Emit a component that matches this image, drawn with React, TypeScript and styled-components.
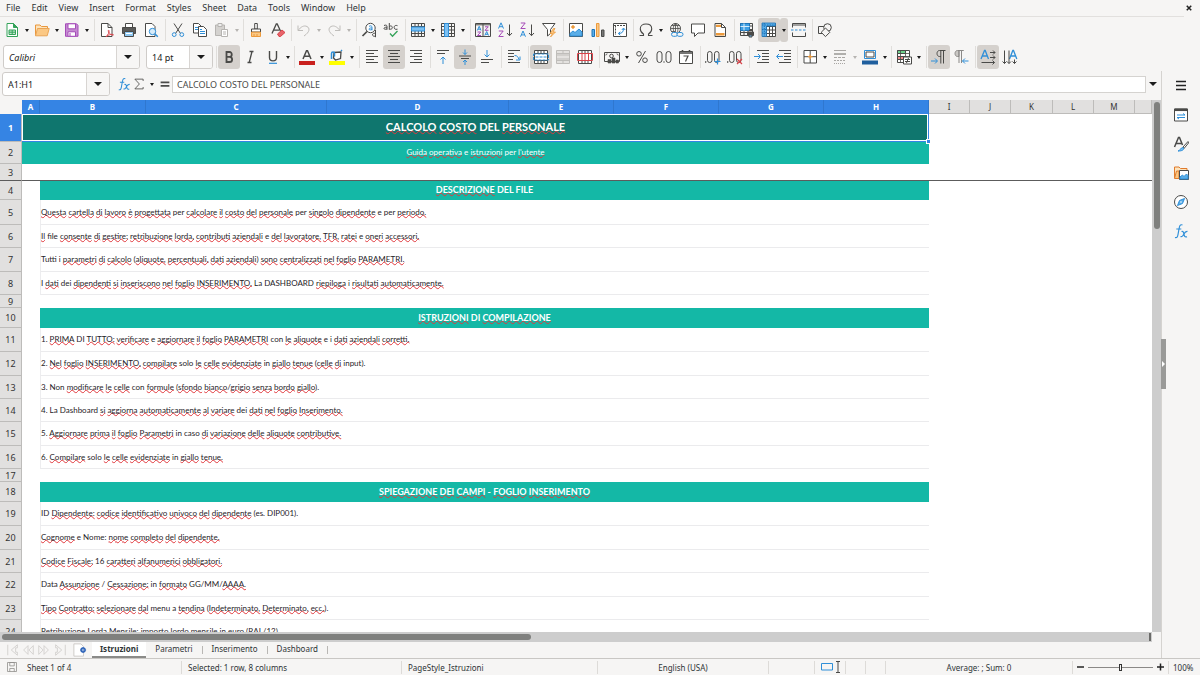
import React from 'react';
import styled, { createGlobalStyle, css } from 'styled-components';

const ui = '"Noto Sans", "Open Sans", sans-serif';
const cellFont = 'Lato, "Noto Sans", sans-serif';
const ink = '#4a4a48';
const blue = '#2f8fd8';
const red = '#d9434a';
const purple = '#a54bb8';
const orange = '#ec9a3c';
const green = '#35a35a';
const faint = '#bfbdba';
const line = '#d5d3d0';

const GlobalStyle = createGlobalStyle`
  * { box-sizing: border-box; }
  body { margin: 0; background: #f6f5f4; font-family: ${ui}; font-size: 9px; color: #2e3436; overflow: hidden; }
  button, input { font: inherit; color: inherit; margin: 0; padding: 0; border: 0; background: none; outline: 0; border-radius: 0; min-width: 0; }
  svg { display: block; flex: none; }
`;

/* ---------- icons ---------- */

const Svg = ({ children, size = 16 }: { children: React.ReactNode; size?: number }) => (
  <svg width={size} height={size} viewBox="0 0 16 16" fill="none" stroke={ink} strokeWidth="1" aria-hidden="true">
    {children}
  </svg>
);

const Lines = ({ rows, color = ink }: { rows: [number, number, number][]; color?: string }) => (
  <>
    {rows.map(([x1, x2, y]) => (
      <path key={y} d={`M${x1} ${y}H${x2}`} stroke={color} />
    ))}
  </>
);

const gridPath = 'M1.5 1.5h13v13h-13zM1.5 4.5h13M1.5 8h13M1.5 11.5h13M5 1.5v13M8.3 1.5v13M11.5 1.5v13';
const sortArrow = 'M12.5 2.5v11M10 11l2.5 2.7L15 11';

const icons: Record<string, React.ReactNode> = {
  newDoc: (
    <>
      <path d="M3 1.5h6.5l4 4v9H3z" fill="#fff" stroke={green} />
      <path d="M9.5 1.5v4h4z" fill={green} stroke={green} />
      <path d="M5 8h6.5v4.5H5zM5 10.2h6.5M8.2 8v4.5" stroke={green} fill="#bfe6cb" />
    </>
  ),
  open: (
    <>
      <path d="M1.5 13.5V3H6l1.500 1.500h6v2" fill="#fde3bb" stroke="#e9973d" />
      <path d="M1.5 13.8 3.5 6.5h11.7l-2 7.3z" fill="#fbc884" stroke="#e9a455" />
    </>
  ),
  save: (
    <>
      <path d="M1.5 1.800h11L14 3.300v11H1.500z" fill="#c58ad2" stroke={purple} />
      <path d="M4 1.800h7.500v5H4z" fill="#fff" stroke={purple} />
      <path d="M4 14.300V9.800h7.500v4.500z" fill="#fff" stroke={purple} />
      <path d="M6 11v3" stroke={purple} />
    </>
  ),
  pdf: (
    <>
      <path d="M2.500 1.500H9l4 4v9H2.500z" fill="#fff" />
      <path d="M9 1.500v4h4" />
      <path d="M7 14.800c2-2 3.500-4.500 3-6.300-.6-1-1 .3-.4 1.500 1 2 3 3.500 4.900 3-.5-1.400-4.500-.6-7.500 1.800z" stroke={red} />
    </>
  ),
  print: (
    <>
      <path d="M4.500 5.500v-4h7v4" fill="#fff" />
      <path d="M1.500 5.500h13v6h-13z" fill="#5a5a58" />
      <path d="M3.500 9.500h9v5h-9z" fill="#8fc8f2" stroke={ink} />
      <path d="M5 11.500h6" stroke="#fff" />
    </>
  ),
  preview: (
    <>
      <path d="M2.500 1.500H9l3 3v10H2.500z" fill="#fff" />
      <circle cx="9.500" cy="9.500" r="3.200" fill="#d8ecfa" stroke={blue} />
      <path d="m12 12 2.800 2.800" stroke={blue} strokeWidth="1.500" />
    </>
  ),
  cut: (
    <>
      <path d="M4 1.500 10.500 11.500M12 1.500 5.500 11.500" />
      <circle cx="4.200" cy="12.600" r="1.900" stroke={blue} />
      <circle cx="11.800" cy="12.600" r="1.900" stroke={blue} />
    </>
  ),
  copy: (
    <>
      <path d="M1.500 1.500h5L9 4v7H1.500z" fill="#fff" />
      <path d="M3 5.500h3M3 7.500h3" stroke={blue} />
      <path d="M6.500 4.500h5l3 3v7h-8z" fill="#fff" />
      <path d="M8 9.500h5M8 11.500h5M8 7.500h2" stroke={blue} />
    </>
  ),
  paste: (
    <g stroke="#b6b4b1">
      <path d="M1.500 3h9v10.500h-9z" fill="#d4d2cf" />
      <path d="M4 1.500h4v3H4z" fill="#eee" />
      <path d="M7.500 7.500h6v7h-6z" fill="#fff" />
      <path d="M9 10h3M9 12h3" />
    </g>
  ),
  brush: (
    <>
      <path d="M6.700 1.500h2.600V7H6.700z" fill="#fff" />
      <path d="M3.500 7h9v3h-9z" fill="#fff" />
      <path d="M3.500 10.200h9v4.300h-9z" fill="#fbc884" stroke={orange} />
      <path d="M6 12v2.500M9 12v2.500" stroke={orange} />
    </>
  ),
  clear: (
    <>
      <path d="M2 11.500 6.300 2h.9L10.500 9M3.800 8.200h5.500" strokeWidth="1.300" />
      <path d="m7.500 12 4.500-4 3 2.500-4.500 4H9z" fill="#e8646a" stroke={red} />
    </>
  ),
  undo: <path d="M2 3.500v5h5M2.300 8.300C4.500 5 8 3 11 4.500c3 1.500 3 5.500-3 9.500" stroke={faint} />,
  redo: <path d="M14 3.500v5H9M13.700 8.300C11.500 5 8 3 5 4.500c-3 1.500-3 5.500 3 9.500" stroke={faint} />,
  find: (
    <>
      <circle cx="9.500" cy="6" r="4.700" fill="#fff" />
      <path d="M6 9.500 1.500 14" strokeWidth="1.700" />
      <path d="M8 4.300c2-1 3-.3 3 1v3M11 6c-4-.5-4 3 0 1.500" stroke={blue} />
      <path d="M14.500 8v7.200M14.500 11.500c-3.500-1.500-4.500 3.500 0 2.700" stroke={ink} />
    </>
  ),
  spell: (
    <>
      <path d="M1 3.500c2-.8 3-.3 3 1v3.200M4 5.200c-4-.3-4 3.200 0 1.700M6.300 1v6.700M6.300 4.500c3.500-2.500 4.500 4 0 2.500M14.500 3.700c-4.500-1.700-4.500 5 0 3.500" />
      <path d="m7 11.500 2.500 2.800L14.500 9" stroke={green} strokeWidth="1.300" />
    </>
  ),
  row: (
    <>
      <path d={gridPath} />
      <path d="M1.500 5h13v4h-13z" fill="#7cc0f2" stroke={blue} />
    </>
  ),
  column: (
    <>
      <path d={gridPath} />
      <path d="M4.500 1.500h4v13h-4z" fill="#7cc0f2" stroke={blue} />
    </>
  ),
  sort: (
    <>
      <path d="M.5 1.500h15v13H.5zM8 1.500v13M.5 2.800h15" />
      <path d="M2.300 8.500 4.200 4.300 6 8.500M3 7.200h2.500M9.800 13.500l1.900-4 1.800 4M10.500 12.300H13" stroke={blue} />
      <path d="M2.500 10h3.300l-3.300 3.500h3.500M10 4.800h3.300L10 8.300h3.500" stroke={purple} />
    </>
  ),
  ascending: (
    <>
      <path d="M1.500 6.500 4 .8l2.500 5.700M2.300 4.700h3.500" stroke={blue} />
      <path d="M1.800 9h4.400l-4.400 5.500h4.700" stroke={purple} />
      <path d={sortArrow} />
    </>
  ),
  descending: (
    <>
      <path d="M1.800 1h4.400L1.800 6.500h4.700" stroke={purple} />
      <path d="M1.500 14.700 4 9l2.500 5.700M2.300 12.900h3.500" stroke={blue} />
      <path d={sortArrow} />
    </>
  ),
  filter: (
    <>
      <path d="M1.500 1.500H14L9.500 7.500v4L6.500 14V7.500z" fill="#fff" />
      <path d="M12.500 6.500 9 11.500h2.500L9.500 15l5-5H12l2-3.500z" fill="#fbc884" stroke={orange} strokeWidth=".8" />
    </>
  ),
  image: (
    <>
      <path d="M1.500 1.500h13v13h-13z" fill="#fff" />
      <circle cx="5" cy="5" r="1.300" fill={orange} stroke={orange} />
      <path d="M2 14v-2.500L5 9l2 1.500L11 7l3 3v4z" fill="#5aaee8" stroke={blue} />
    </>
  ),
  chart: (
    <>
      <path d="M2 7.500h2.500v7H2z" fill="#5aaee8" stroke="#1e74b8" />
      <path d="M6.500 1.500H9v13H6.500z" fill="#fbc884" stroke={orange} />
      <path d="M11.500 8H14v6.500h-2.500z" fill="#777" />
    </>
  ),
  pivot: (
    <>
      <path d="M1.500 1.500h13v13h-13z" fill="#fff" />
      <path d="M3.500 3.500V13M2 3.500h12" strokeDasharray="2 1" />
      <path d="M6.500 11.500c3.500 0 5-1.500 5-5M9.800 8l1.700-2 1.700 2M8.300 9.800l-2 1.700 2 1.700" stroke={blue} />
    </>
  ),
  omega: <path d="M1.500 13.500h4V12C3 10.500 2.300 8.500 2.300 6.700 2.300 4 4.500 2 8 2s5.700 2 5.700 4.700c0 1.800-.7 3.800-3.200 5.300v1.500h4" strokeWidth="1.100" />,
  link: (
    <>
      <circle cx="7.500" cy="6.500" r="5" />
      <path d="M2.500 6.500h10M7.500 1.500v10M4 3.500h7M4 9.500h3M7.500 1.500c-3 3-3 7 0 10M7.500 1.500c3 3 3 6 1.500 9" strokeWidth=".8" />
      <rect x="3.500" y="10.500" width="6" height="3.800" rx="1.900" stroke={blue} fill="#f6f5f4" />
      <rect x="9" y="10.500" width="6" height="3.800" rx="1.900" stroke={blue} fill="#f6f5f4" />
    </>
  ),
  comment: <path d="M1.500 2h13v9H8l-3.500 3.500V11h-3z" fill="#fff" />,
  headerFooter: (
    <>
      <path d="M3 1.500h6.500l4 4v9H3z" fill="#fff" />
      <path d="M4 2.700h5V5H4zM4 11h8.500v2.500H4z" fill={orange} stroke="none" />
      <path d="M9.500 1.500v4h4" />
    </>
  ),
  printArea: (
    <>
      <path d="M1.500 1.500h12v12h-12zM1.500 4h12M1.500 7.500h12M1.500 10.500h12M5 1.500v12M9 1.500v12" />
      <path d="M1.500 1.500h9v7h-9z" fill="#3f9fe3" stroke="#1e74b8" />
      <path d="M1.500 4.500h9M5 1.500v7" stroke="#d8ecfa" />
      <path d="M8.500 10h6v3.500h-6z" fill="#4b4b49" />
      <path d="M10 8.500h3M10 13h3v2h-3z" fill="#6eb4ea" />
    </>
  ),
  freeze: (
    <>
      <path d="M2 1.500h12.500v13H2z" fill="#fff" />
      <path d="M2 4.500h12.500M2 8h12.500M2 11.500h12.500M5.500 1.500v13M8.500 1.500v13M11.500 1.500v13" />
      <path d="M1 1h13.500v3h-9v10.500H1z" fill="#5aaee8" stroke="#1e74b8" strokeWidth=".8" />
      <path d="M3.300 1v13M1 3h13M1 7.500h4M1 11h4" stroke="#1e74b8" strokeDasharray="1.500 1" />
    </>
  ),
  split: (
    <>
      <path d="M1.500 5.500v-4h13v4M1.500 10.500v4h13v-4M1.500 3h13" />
      <path d="M0 8h16" stroke={blue} strokeDasharray="2.500 1.500" />
    </>
  ),
  shapes: (
    <>
      <path d="M1.500 4.500h7v7h-7z" />
      <circle cx="10.500" cy="5.500" r="3.800" fill="#f6f5f4" />
      <path d="m8.500 6 4.300 4.300-4.300 4.300-4.300-4.300z" fill="#f6f5f4" />
    </>
  ),
  bold: <path d="M5.500 3v10h3c3.500 0 3.500-5.200 0-5.200h-3 3c3 0 3-4.800 0-4.800z" strokeWidth="1.800" />,
  italic: <path d="M6.500 2.500h4M4.500 13.500h4M9 2.500 6.200 13.500" strokeWidth="1.300" />,
  underline: (
    <>
      <path d="M4.500 2v6.500c0 4.500 7 4.500 7 0V2" strokeWidth="1.400" />
      <path d="M4 14.300h8" stroke={blue} strokeWidth="1.200" />
    </>
  ),
  fontColor: (
    <>
      <path d="M4 10 7.500 1.800h1L12 10M5.300 7.300h5.400" strokeWidth="1.500" />
      <path d="M0 14h16" stroke="#c9211e" strokeWidth="4" />
    </>
  ),
  highlight: (
    <>
      <path d="m5 3.500 7-.5-.5 6.500-5 1.500-2-2z" fill="#fff" strokeWidth="1.300" />
      <path d="M2.500 10V4.500c0-2 3-2 3 0v3M12 2l1-1" stroke={blue} strokeWidth="1.500" />
      <path d="M0 14h16" stroke="#ffff00" strokeWidth="4" />
    </>
  ),
  alignLeft: <Lines rows={[[2, 14, 1.5], [2, 10, 4.5], [2, 14, 7.5], [2, 10, 10.5], [2, 14, 13.5]]} />,
  alignCenter: <Lines rows={[[2, 14, 1.5], [4, 12, 4.5], [2, 14, 7.5], [4, 12, 10.5], [2, 14, 13.5]]} />,
  alignRight: <Lines rows={[[2, 14, 1.5], [6, 14, 4.5], [2, 14, 7.5], [6, 14, 10.5], [2, 14, 13.5]]} />,
  alignTop: (
    <>
      <Lines rows={[[2, 14, 1.5], [2, 10, 4.5]]} />
      <path d="M8 15V8M5.500 10.500 8 8l2.500 2.500" stroke={blue} />
    </>
  ),
  alignMiddle: (
    <>
      <Lines rows={[[2, 14, 7], [4, 12, 9.5]]} />
      <path d="M8 .5v5M6 3.500l2 2 2-2M8 16v-5M6 13l2-2 2 2" stroke={blue} />
    </>
  ),
  alignBottom: (
    <>
      <Lines rows={[[2, 14, 10.5], [2, 10, 13.5]]} />
      <path d="M8 1v7M5.500 5.500 8 8l2.500-2.500" stroke={blue} />
    </>
  ),
  wrap: (
    <>
      <Lines rows={[[2, 14, 1.5], [2, 8, 4.5], [2, 8, 7.5], [2, 7, 10.5], [2, 14, 13.5]]} />
      <path d="M8.500 6.500c3 0 3.500 1.500 4.500 4M14 7.500V11h-4" stroke={blue} />
    </>
  ),
  merge: (
    <>
      <path d="M1.500 1.500h13v13h-13z" fill="#fff" />
      <path d="M1.500 4.500h13M1.500 11.500h13M5 1.500v3M8 1.500v3M11 1.500v3M5 11.500v3M8 11.500v3M11 11.500v3" />
      <path d="M.5 5h15v6H.5zM2.500 8h11" stroke={blue} strokeDasharray="3 1" />
    </>
  ),
  mergeCells: <path d="M1.500 1.500h13v13h-13zM1.500 4.500h13M1.500 11.500h13M8 1.500v3M8 11.500v3M1.500 6h13v4h-13z" stroke={faint} fill="#e4e2e0" />,
  unmerge: (
    <>
      <path d="M1.500 1.500h13v13h-13zM5 1.500v3M8 1.500v3M11 1.500v3M5 11.500v3M8 11.500v3M11 11.500v3" fill="#fff" />
      <path d="M.5 4.500h15v7H.5zM5 4.500v7M8 4.500v7M11.500 4.500v7" stroke={red} />
    </>
  ),
  currency: (
    <>
      <path d="M.5 3.500h15v9H.5z" />
      <path d="M1.500 6C3 6 3 4.500 3 4.500M14.500 6C13 6 13 4.500 13 4.500" />
      <circle cx="7.500" cy="7" r="1.800" />
      <path d="M4 10.500h3V14H4zM8 9h3v5H8zM12 11h2.500v3H12z" fill="#4b4b49" strokeWidth=".6" />
    </>
  ),
  percent: (
    <>
      <circle cx="5" cy="4.800" r="2.300" />
      <circle cx="11" cy="11.200" r="2.300" />
      <path d="m11.500 2-7 12" />
    </>
  ),
  number: (
    <>
      <rect x="1" y="2.500" width="5" height="11" rx="2.500" />
      <rect x="10" y="2.500" width="5" height="11" rx="2.500" />
      <path d="M7.500 13h1" strokeWidth="1.300" />
    </>
  ),
  date: (
    <>
      <path d="M1.500 2.500h13v12h-13z" fill="#fff" />
      <path d="M1.500 4h13M4.500 1v2M11.500 1v2" strokeWidth="1.600" />
      <path d="M5.500 7H10L7.500 12.500" strokeWidth="1.200" />
    </>
  ),
  addDecimal: (
    <>
      <path d="M0 13h1.300" strokeWidth="1.300" />
      <rect x="2.500" y="2.500" width="4.500" height="11" rx="2.200" />
      <rect x="9.500" y="2.500" width="4.500" height="11" rx="2.200" />
      <path d="M12.500 9.500v6M9.500 12.500h6" stroke={blue} strokeWidth="1.200" />
    </>
  ),
  removeDecimal: (
    <>
      <path d="M0 13h1.300" strokeWidth="1.300" />
      <rect x="2.500" y="2.500" width="4.500" height="11" rx="2.200" />
      <rect x="9.500" y="2.500" width="4.500" height="11" rx="2.200" />
      <path d="m10 10 5 5M15 10l-5 5" stroke={red} strokeWidth="1.200" />
    </>
  ),
  indent: (
    <>
      <Lines rows={[[3, 15, 1.5], [8, 15, 4.5], [8, 15, 7.5], [8, 15, 10.5], [3, 15, 13.5]]} />
      <path d="M0 7.500h6M4 5l2.500 2.500L4 10" stroke={blue} />
    </>
  ),
  outdent: (
    <>
      <Lines rows={[[3, 15, 1.5], [8, 15, 4.5], [8, 15, 7.5], [8, 15, 10.5], [3, 15, 13.5]]} />
      <path d="M7 7.500H1M3 5 .5 7.500 3 10" stroke={blue} />
    </>
  ),
  borders: (
    <>
      <path d="M2 1.500h12.500v12.500H2z" fill="#fff" />
      <path d="M8.200 2v12M2 7.700h12.500" />
      <path d="M8.200 5.500V10M6 7.700h4.500" stroke={orange} strokeWidth="1.200" />
    </>
  ),
  borderStyle: (
    <g stroke="#a9a7a4">
      <path d="M2 1.500h12" />
      <path d="M2 5h12" strokeWidth="1.800" />
      <path d="M2 8.500h12" strokeDasharray="3 1" />
      <path d="M2 11.500h12" strokeDasharray="2 1" />
      <path d="M2 14.500h12" strokeDasharray="1 1" />
    </g>
  ),
  borderColor: (
    <>
      <path d="M2.500 1.500h11v8h-11z" fill="#fff" stroke={blue} />
      <path d="M4 3h8v5H4z" />
      <path d="M0 13.500h16" stroke="#1f5f9e" strokeWidth="4" />
    </>
  ),
  conditional: (
    <>
      <path d="M1.500 1.500h12v12h-12z" fill="#fff" />
      <path d="M1.500 1.500h8v3h-8z" fill="#6fd08c" />
      <path d="M1.500 7.500h8v3h-8z" fill="#f08a8e" />
      <path d="M1.500 4.500h12M1.500 7.500h12M1.500 10.500h12M4.500 1.500v12M9.500 1.500v12" strokeWidth=".8" />
      <path d="M7.500 8h8v7h-8z" fill="#fff" />
      <path d="M9 10.500h5M9 12.500h5M12.500 9l-2 5" />
    </>
  ),
  ltr: (
    <>
      <path d="M14.500 1.500h-6c-3.300 0-3.300 6 0 6h1.300M9.800 1.500v13M12.500 1.500v13" />
      <path d="M0 12h6M4 9.500 6.500 12 4 14.500" stroke={blue} />
    </>
  ),
  rtl: (
    <>
      <path d="M10.500 1.500h-6c-3.300 0-3.300 6 0 6H6v-6z" fill="#c9c7c4" stroke="#8b8987" />
      <path d="M6 1.500V14M8.500 1.500V14" stroke="#8b8987" />
      <path d="M15.500 12h-6M12 9.500 9.500 12l2.500 2.500" stroke={blue} />
    </>
  ),
  horizontal: (
    <>
      <path d="M1 10 4.500 1.500h.7L8.500 10M2.300 7h5" stroke={blue} strokeWidth="1.300" />
      <path d="M10 3.500h5M13 1.500l2 2-2 2M10 8.500h5M13 6.500l2 2-2 2M1.500 13.500h13M12.500 11.500l2 2-2 2" />
    </>
  ),
  vertical: (
    <>
      <path d="M7.500 10l3.300-8.500h.7l3.300 8.500M8.700 7h5" stroke={blue} strokeWidth="1.300" />
      <path d="M2.500 1.500v13M.5 12.500l2 2 2-2M7 1.500v13M5 12.500l2 2 2-2M12.500 10.500v4M10.500 12.500l2 2 2-2" />
    </>
  ),
  fx: (
    <>
      <path d="M9.500 2C7 1 6.500 3 6 6l-1 5.500C4.600 14 4 15 2 14.500M3.300 6h5" stroke={blue} strokeWidth="1.200" />
      <path d="M8.500 8.500c2-.5 2 1 2.500 3s1 3 3 2.200M14.500 8.500C12 8 11 11 10 12.500S8.500 14 7.500 13.500" stroke={blue} strokeWidth="1.200" />
    </>
  ),
  sigma: <path d="M13.500 4V1.500H2.500L8.500 8l-6 6.500h11V12" strokeWidth="1.100" />,
  equals: <path d="M3 6h10M3 10h10" strokeWidth="2" />,
  hamburger: <path d="M3 3.500h10M3 7.500h10M3 11.500h10" strokeWidth="1.600" stroke="#222" />,
  properties: (
    <>
      <path d="M1.500 2h13v12h-13z" fill="#fff" />
      <path d="M1.500 2.800h13" strokeWidth="2.500" />
      <path d="M4 8h8M10 6.500 12 8M4 10.500h8M6 12l-2-1.500" stroke={blue} />
    </>
  ),
  styles: (
    <>
      <path d="M1.500 11 5.500 1.500h1L9.500 9M3 7.500h5.500" strokeWidth="1.500" />
      <path d="M15 5.500 10 11l1 1.500L15.500 7z" fill="#fff" />
      <path d="M5 15c2 0 2.500-3.500 5-3.500 1.500 1 1 3.500-5 3.500z" fill="#7cc0f2" stroke={blue} />
    </>
  ),
  gallery: (
    <>
      <path d="M1.500 13V2H6l1.500 1.500H14V5" fill="#fde3bb" stroke="#e07b2c" />
      <path d="M1.500 13.500 3.500 6H6v7.500z" fill="#fbc884" stroke="#e07b2c" />
      <path d="M6.500 5.500h9v9h-9z" fill="#fff" />
      <path d="M7 14v-2l2.500-2 1.500 1.500L13.500 9l1.500 1.500V14z" fill="#5aaee8" stroke={blue} />
    </>
  ),
  navigator: (
    <>
      <circle cx="8" cy="8" r="6.500" fill="#fff" />
      <path d="m11.500 4.500-2 5-5 2 2-5z" fill="#5aaee8" stroke={blue} />
      <circle cx="8" cy="8" r=".8" fill="#fff" stroke="none" />
    </>
  ),
  addSheet: (
    <>
      <path d="M1 1h8l3 3v11H1z" fill="#fff" stroke="#c9c7c4" />
      <circle cx="11.500" cy="8" r="2.300" fill="#fff" stroke="#2b62b8" strokeWidth="1.600" />
      <path d="M11.500 4.500v7M8 8h7" stroke="#2b62b8" strokeWidth=".8" />
    </>
  ),
  disk: <path d="M2 2h12v12H2zM5 2h6v4.500H5zM5 14v-4h6v4" stroke="#8b8987" />,
  first: <path d="M2 2v12M13 2 6 8l7 6v-3.500h-2v-5h2z" stroke="#d0cecb" />,
  previous: <path d="M8 3 3 8l5 5zM14 3 9 8l5 5z" stroke="#d0cecb" />,
  next: <path d="m8 3 5 5-5 5zM2 3l5 5-5 5z" stroke="#d0cecb" />,
  last: <path d="M14 2v12M3 2l7 6-7 6v-3.500h2v-5H3z" stroke="#d0cecb" />,
  close: <path d="m5 5 6 6M11 5l-6 6" strokeWidth="2" stroke="#222" />,
};

/* ---------- window frame ---------- */

const Window = styled.div`
  display: flex;
  flex-direction: column;
  height: 100vh;
  min-height: 320px;
`;

const MenuBar = styled.nav`
  display: flex;
  align-items: center;
  gap: 11px;
  height: 17px;
  padding-left: 6px;
  margin-right: 16px;
  border-bottom: 1px solid #e2e0de;
`;

const MenuButton = styled.button`
  line-height: 16px;
`;

const CloseButton = styled.button`
  margin-left: auto;
  margin-right: -11px;
`;

const Toolbar = styled.div`
  display: flex;
  align-items: center;
  height: 26px;
  padding-left: 1px;
`;

const FormatBar = styled(Toolbar)`
  height: 28px;
  padding-left: 3px;
`;

const Separator = styled.span<{ $tight?: boolean }>`
  width: ${(p) => (p.$tight ? 4 : 5)}px;
  height: 22px;
  flex: none;
  border-right: 1px solid #e0dedb;
  margin-right: 1px;
  margin-left: -1px;
`;

const ToolButton = styled.button<{ $on?: boolean; $narrow?: boolean }>`
  display: flex;
  align-items: center;
  justify-content: center;
  flex: none;
  width: ${(p) => (p.$narrow ? 8 : 22)}px;
  height: 24px;
  border-radius: 3px;
  ${(p) => p.$on && css`background: #d5d1cd;`}
`;

const Caret = styled.span<{ $big?: boolean; $off?: boolean }>`
  border: solid transparent;
  border-width: ${(p) => (p.$big ? '4px 4px 0' : '3px 2px 0')};
  border-top-color: ${(p) => (p.$off ? '#b6b4b1' : '#1c1c1c')};
`;

type Tool = { icon: string; label: string; menu?: boolean; on?: boolean; off?: boolean };

const Tools = ({ groups, tight }: { groups: Tool[][]; tight: number[] }) => (
  <>
    {groups.map((group, g) => (
      <React.Fragment key={g}>
        {g > 0 && <Separator $tight={tight.includes(g)} />}
        {group.map((t) => (
          <React.Fragment key={t.label}>
            <ToolButton $on={t.on} aria-label={t.label} disabled={t.off}>
              <Svg>{icons[t.icon]}</Svg>
            </ToolButton>
            {t.menu && (
              <ToolButton $narrow $on={t.on} aria-label={`${t.label} options`}>
                <Caret $off={t.off} />
              </ToolButton>
            )}
          </React.Fragment>
        ))}
      </React.Fragment>
    ))}
  </>
);

const standardTools: Tool[][] = [
  [
    { icon: 'newDoc', label: 'New', menu: true },
    { icon: 'open', label: 'Open', menu: true },
    { icon: 'save', label: 'Save', menu: true },
  ],
  [
    { icon: 'pdf', label: 'Export as PDF' },
    { icon: 'print', label: 'Print' },
    { icon: 'preview', label: 'Print Preview' },
  ],
  [
    { icon: 'cut', label: 'Cut' },
    { icon: 'copy', label: 'Copy' },
    { icon: 'paste', label: 'Paste', menu: true, off: true },
  ],
  [
    { icon: 'brush', label: 'Clone Formatting' },
    { icon: 'clear', label: 'Clear Formatting' },
  ],
  [
    { icon: 'undo', label: 'Undo', menu: true, off: true },
    { icon: 'redo', label: 'Redo', menu: true, off: true },
  ],
  [
    { icon: 'find', label: 'Find and Replace' },
    { icon: 'spell', label: 'Spelling' },
  ],
  [
    { icon: 'row', label: 'Row', menu: true },
    { icon: 'column', label: 'Column', menu: true },
  ],
  [
    { icon: 'sort', label: 'Sort' },
    { icon: 'ascending', label: 'Sort Ascending' },
    { icon: 'descending', label: 'Sort Descending' },
    { icon: 'filter', label: 'AutoFilter' },
  ],
  [
    { icon: 'image', label: 'Insert Image' },
    { icon: 'chart', label: 'Insert Chart' },
    { icon: 'pivot', label: 'Pivot Table' },
  ],
  [
    { icon: 'omega', label: 'Special Character', menu: true },
    { icon: 'link', label: 'Hyperlink' },
    { icon: 'comment', label: 'Comment' },
    { icon: 'headerFooter', label: 'Headers and Footers' },
  ],
  [
    { icon: 'printArea', label: 'Print Area' },
    { icon: 'freeze', label: 'Freeze Rows and Columns', menu: true, on: true },
    { icon: 'split', label: 'Split Window' },
  ],
  [{ icon: 'shapes', label: 'Draw Functions' }],
];

const formatTools: Tool[][] = [
  [
    { icon: 'bold', label: 'Bold', on: true },
    { icon: 'italic', label: 'Italic' },
    { icon: 'underline', label: 'Underline', menu: true },
  ],
  [
    { icon: 'fontColor', label: 'Font Color', menu: true },
    { icon: 'highlight', label: 'Background Color', menu: true },
  ],
  [
    { icon: 'alignLeft', label: 'Align Left' },
    { icon: 'alignCenter', label: 'Center Horizontally', on: true },
    { icon: 'alignRight', label: 'Align Right' },
  ],
  [
    { icon: 'alignTop', label: 'Align Top' },
    { icon: 'alignMiddle', label: 'Center Vertically', on: true },
    { icon: 'alignBottom', label: 'Align Bottom' },
  ],
  [{ icon: 'wrap', label: 'Wrap Text' }],
  [
    { icon: 'merge', label: 'Merge and Center', on: true },
    { icon: 'mergeCells', label: 'Merge Cells', off: true },
    { icon: 'unmerge', label: 'Unmerge Cells' },
  ],
  [
    { icon: 'currency', label: 'Currency', menu: true },
    { icon: 'percent', label: 'Percent' },
    { icon: 'number', label: 'Number' },
    { icon: 'date', label: 'Date' },
  ],
  [
    { icon: 'addDecimal', label: 'Add Decimal Place' },
    { icon: 'removeDecimal', label: 'Delete Decimal Place' },
  ],
  [
    { icon: 'indent', label: 'Increase Indent' },
    { icon: 'outdent', label: 'Decrease Indent' },
  ],
  [
    { icon: 'borders', label: 'Borders', menu: true },
    { icon: 'borderStyle', label: 'Border Style', menu: true, off: true },
    { icon: 'borderColor', label: 'Border Color', menu: true },
  ],
  [{ icon: 'conditional', label: 'Conditional Formatting', menu: true }],
  [
    { icon: 'ltr', label: 'Left-To-Right', on: true },
    { icon: 'rtl', label: 'Right-To-Left' },
  ],
  [
    { icon: 'horizontal', label: 'Text Direction Left to Right', on: true },
    { icon: 'vertical', label: 'Text Direction Top to Bottom' },
  ],
];

const Combo = styled.div<{ $width: number }>`
  display: flex;
  flex: none;
  width: ${(p) => p.$width}px;
  height: 24px;
  border: 1px solid #cfccc9;
  border-radius: 3px;
  background: #fff;
  overflow: hidden;
`;

const ComboInput = styled.input<{ $italic?: boolean }>`
  flex: 1;
  padding-left: 5px;
  color: #1c1c1c;
  font-style: ${(p) => (p.$italic ? 'italic' : 'normal')};
`;

const ComboButton = styled.button`
  display: flex;
  align-items: center;
  justify-content: center;
  width: 23px;
  border-left: 1px solid #d8d5d2;
  background: #f7f6f5;
`;

const ComboGap = styled.span`
  width: 6px;
  flex: none;
`;

const Workspace = styled.div`
  display: flex;
  flex: 1;
  min-height: 0;
`;

const Main = styled.main`
  display: flex;
  flex-direction: column;
  flex: 1;
  min-width: 0;
`;

const FormulaBar = styled.div`
  display: flex;
  align-items: center;
  height: 29px;
  padding: 0 2px 3px;
`;

const FormulaTools = styled.div`
  display: flex;
  align-items: center;
  padding-left: 6px;
`;

const SmallTool = styled.button<{ $w: number }>`
  display: flex;
  align-items: center;
  justify-content: center;
  width: ${(p) => p.$w}px;
  height: 22px;
`;

const FormulaInput = styled.input`
  flex: 1;
  height: 17px;
  padding-left: 4px;
  color: #4a4a48;
  background: #fff;
  border: 1px solid ${line};
`;

/* ---------- sheet ---------- */

const SheetArea = styled.div`
  display: flex;
  flex: 1;
  min-height: 0;
`;

const GridViewport = styled.div`
  flex: 1;
  min-width: 0;
  overflow: hidden;
  background: #fff;
`;

const Grid = styled.table`
  table-layout: fixed;
  width: 100%;
  border-collapse: separate;
  border-spacing: 0;
`;

const ColumnHead = styled.th<{ $on?: boolean }>`
  height: 14px;
  padding: 0;
  font-size: 8px;
  line-height: 13px;
  font-weight: ${(p) => (p.$on ? 700 : 400)};
  color: ${(p) => (p.$on ? '#fff' : '#333')};
  background: ${(p) => (p.$on ? '#3584e4' : '#e1e0df')};
  border-right: 1px solid ${(p) => (p.$on ? '#2f77cf' : '#bdbcba')};
  border-bottom: 1px solid ${(p) => (p.$on ? '#3584e4' : '#bdbcba')};
`;

const Corner = styled.th`
  padding: 0;
  background: #f6f5f4;
`;

const RowHead = styled.th<{ $on?: boolean; $frozen?: boolean }>`
  padding: 1px 0 0;
  font-size: 9px;
  line-height: 10px;
  font-weight: ${(p) => (p.$on ? 700 : 400)};
  color: ${(p) => (p.$on ? '#fff' : '#333')};
  background: ${(p) => (p.$on ? '#3584e4' : '#e1e0df')};
  border-right: 1px solid #bdbcba;
  border-bottom: 1px solid ${(p) => (p.$frozen ? '#5c5c5c' : '#bdbcba')};
`;

const Row = styled.tr<{ $h: number }>`
  height: ${(p) => p.$h}px;
`;

const Blank = styled.td<{ $frozen?: boolean }>`
  padding: 0;
  ${(p) => p.$frozen && css`border-bottom: 1px solid #5c5c5c;`}
`;

const TitleCell = styled.td`
  position: relative;
  padding: 0 0 3px;
  background: #0f766e;
  color: #fff;
  font: 700 11px/14px ${cellFont};
  text-align: center;
  box-shadow: inset -1px -1px #3584e4, inset -2px -2px #fff, inset 1px 1px #fff;
`;

const FillHandle = styled.span`
  position: absolute;
  right: -2px;
  bottom: -2px;
  width: 5px;
  height: 5px;
  background: #3584e4;
  border: 1px solid #fff;
`;

const BandCell = styled.td<{ $bold?: boolean }>`
  padding: 0 0 2px;
  background: #14b8a6;
  color: #fff;
  font: ${(p) => (p.$bold ? '700 9px' : '400 8px')} / 11px ${cellFont};
  text-align: center;
`;

const TextCell = styled.td`
  padding: 0;
  color: #1f2328;
  font: 400 8px/11px ${cellFont};
  white-space: nowrap;
  border-left: 1px solid #ededef;
  border-bottom: 1px solid #ebebed;
`;

const Misspelt = styled.span`
  text-decoration: underline wavy #e0383c 1px;
  text-decoration-skip-ink: none;
  text-underline-offset: -1px;
`;

const known = new Set(
  'e i I per file FILE DEL DI Tutti dei solo in input con Non La DASHBOARD Dashboard Data a menu Nome ID es DIP001 caso euro RAL GG MM'.split(' '),
);

const Spelled = ({ children }: { children: string }) => (
  <>
    {children.split(/([\p{L}\d']+[,.:]?)/u).map((part, n) => {
      const word = part.replace(/[,.:]$/, '');
      return n % 2 === 0 || known.has(word) || /^\d+$/.test(word) ? part : <Misspelt key={n}>{part}</Misspelt>;
    })}
  </>
);

type SheetRow = { h: number; kind?: 'title' | 'subtitle' | 'band' | 'text'; text?: string };

const rows: SheetRow[] = [
  { h: 28, kind: 'title', text: 'CALCOLO COSTO DEL PERSONALE' },
  { h: 22, kind: 'subtitle', text: "Guida operativa e istruzioni per l'utente" },
  { h: 17 },
  { h: 19, kind: 'band', text: 'DESCRIZIONE DEL FILE' },
  { h: 25, kind: 'text', text: 'Questa cartella di lavoro è progettata per calcolare il costo del personale per singolo dipendente e per periodo.' },
  { h: 23, kind: 'text', text: 'Il file consente di gestire: retribuzione lorda, contributi aziendali e del lavoratore, TFR, ratei e oneri accessori.' },
  { h: 24, kind: 'text', text: 'Tutti i parametri di calcolo (aliquote, percentuali, dati aziendali) sono centralizzati nel foglio PARAMETRI.' },
  { h: 23, kind: 'text', text: 'I dati dei dipendenti si inseriscono nel foglio INSERIMENTO. La DASHBOARD riepiloga i risultati automaticamente.' },
  { h: 13 },
  { h: 20, kind: 'band', text: 'ISTRUZIONI DI COMPILAZIONE' },
  { h: 24, kind: 'text', text: '1. PRIMA DI TUTTO: verificare e aggiornare il foglio PARAMETRI con le aliquote e i dati aziendali corretti.' },
  { h: 24, kind: 'text', text: '2. Nel foglio INSERIMENTO, compilare solo le celle evidenziate in giallo tenue (celle di input).' },
  { h: 23, kind: 'text', text: '3. Non modificare le celle con formule (sfondo bianco/grigio senza bordo giallo).' },
  { h: 23, kind: 'text', text: '4. La Dashboard si aggiorna automaticamente al variare dei dati nel foglio Inserimento.' },
  { h: 24, kind: 'text', text: '5. Aggiornare prima il foglio Parametri in caso di variazione delle aliquote contributive.' },
  { h: 23, kind: 'text', text: '6. Compilare solo le celle evidenziate in giallo tenue.' },
  { h: 13 },
  { h: 20, kind: 'band', text: 'SPIEGAZIONE DEI CAMPI - FOGLIO INSERIMENTO' },
  { h: 24, kind: 'text', text: 'ID Dipendente: codice identificativo univoco del dipendente (es. DIP001).' },
  { h: 24, kind: 'text', text: 'Cognome e Nome: nome completo del dipendente.' },
  { h: 23, kind: 'text', text: 'Codice Fiscale: 16 caratteri alfanumerici obbligatori.' },
  { h: 24, kind: 'text', text: 'Data Assunzione / Cessazione: in formato GG/MM/AAAA.' },
  { h: 23, kind: 'text', text: 'Tipo Contratto: selezionare dal menu a tendina (Indeterminato, Determinato, ecc.).' },
  { h: 23, kind: 'text', text: 'Retribuzione Lorda Mensile: importo lordo mensile in euro (RAL/12).' },
];

const columns: [string, number][] = [
  ['A', 18], ['B', 106], ['C', 181], ['D', 182], ['E', 105], ['F', 105], ['G', 105], ['H', 105],
  ['I', 41], ['J', 41], ['K', 42], ['L', 41], ['M', 41],
];

const SheetGrid = () => (
  <Grid>
    <colgroup>
      <col width={22} />
      {columns.map(([name, w]) => (
        <col key={name} width={w} />
      ))}
      <col />
    </colgroup>
    <thead>
      <tr>
        <Corner />
        {columns.map(([name], n) => (
          <ColumnHead key={name} $on={n < 8} scope="col">{name}</ColumnHead>
        ))}
        <ColumnHead />
      </tr>
    </thead>
    <tbody>
      {rows.map((row, n) => (
        <Row key={n} $h={row.h}>
          <RowHead $on={n === 0} $frozen={n === 2} scope="row">{n + 1}</RowHead>
          {!row.kind && <Blank colSpan={14} $frozen={n === 2} />}
          {row.kind === 'title' && (
            <TitleCell colSpan={8}>
              <Spelled>{row.text!}</Spelled>
              <FillHandle />
            </TitleCell>
          )}
          {row.kind === 'subtitle' && <BandCell colSpan={8}><Spelled>{row.text!}</Spelled></BandCell>}
          {(row.kind === 'band' || row.kind === 'text') && <Blank />}
          {row.kind === 'band' && <BandCell colSpan={7} $bold><Spelled>{row.text!}</Spelled></BandCell>}
          {row.kind === 'text' && <TextCell colSpan={7}><Spelled>{row.text!}</Spelled></TextCell>}
          {row.kind && <Blank colSpan={6} />}
        </Row>
      ))}
    </tbody>
  </Grid>
);

const VerticalTrack = styled.div`
  display: flex;
  flex-direction: column;
  width: 9px;
  padding: 2px 1px 0 2px;
  background: #cdcdcd;
`;

const VerticalThumb = styled.div`
  width: 6px;
  height: 24%;
  border-radius: 3px;
  background: #7f807e;
`;

const HorizontalTrack = styled.div`
  display: flex;
  align-items: center;
  justify-content: space-between;
  height: 10px;
  margin-right: 9px;
  padding: 0 1px 0 2px;
  background: #cdcdcd;
`;

const HorizontalThumb = styled.div`
  width: 46%;
  height: 6px;
  border-radius: 3px;
  background: #7f807e;
`;

const SplitGrip = styled.div`
  width: 2px;
  height: 8px;
  background: #6b6b69;
`;

const TabBar = styled.div`
  display: flex;
  align-items: center;
  height: 16px;
  padding-left: 5px;
  font-size: 8px;
`;

const TabTool = styled.button<{ $w: number }>`
  display: flex;
  justify-content: center;
  width: ${(p) => p.$w}px;
`;

const SheetTab = styled.button<{ $on?: boolean }>`
  height: 16px;
  line-height: 14px;
  padding: 0 ${(p) => (p.$on ? 8 : 9)}px;
  ${(p) =>
    p.$on
      ? css`background: #fff; font-weight: 700; border-bottom: 2px solid #8b8b89;`
      : css`border-bottom: 2px solid transparent;`}
`;

const TabDivider = styled.span`
  width: 1px;
  height: 8px;
  background: #b9b7b4;
`;

const Sidebar = styled.aside`
  position: relative;
  display: flex;
  flex-direction: column;
  align-items: center;
  width: 39px;
  border-left: 1px solid ${line};
`;

const SidebarButton = styled.button`
  display: flex;
  align-items: center;
  justify-content: center;
  width: 30px;
  height: 29px;
`;

const SidebarHandle = styled.div`
  position: absolute;
  left: -1px;
  top: 50%;
  margin-top: -26px;
  width: 5px;
  height: 50px;
  display: flex;
  align-items: center;
  background: #9a9a98;
  &::after {
    content: '';
    border: solid transparent;
    border-width: 3px 0 3px 3px;
    border-left-color: #fff;
    margin-left: 1px;
  }
`;

/* ---------- status bar ---------- */

const StatusBar = styled.footer`
  display: grid;
  grid-template-columns: 21px 161fr 220fr 196fr 171fr 46px 31px 20px 20px 187fr 96px 31px;
  height: 17px;
  border-top: 1px solid #c9c7c4;
  font-size: 8px;
  align-items: center;
`;

const StatusItem = styled.div<{ $center?: boolean; $plain?: boolean }>`
  display: flex;
  align-items: center;
  height: 13px;
  padding-left: ${(p) => (p.$center ? 0 : 6)}px;
  justify-content: ${(p) => (p.$center ? 'center' : 'flex-start')};
  white-space: nowrap;
  border-right: 1px solid ${(p) => (p.$plain ? 'transparent' : '#dddbd8')};
`;

const ZoomValue = styled(StatusItem)`
  padding-left: 4px;
`;

const ZoomSlider = styled.input`
  appearance: none;
  width: 65px;
  height: 9px;
  margin: 0 4px;
  background: linear-gradient(#8b8987, #8b8987) center / 100% 1px no-repeat;
  &::-webkit-slider-thumb {
    appearance: none;
    width: 3px;
    height: 7px;
    background: #f6f5f4;
    border: 1px solid #333;
  }
`;

const ZoomButton = styled.button`
  width: 7px;
  height: 8px;
`;

const menus = ['File', 'Edit', 'View', 'Insert', 'Format', 'Styles', 'Sheet', 'Data', 'Tools', 'Window', 'Help'];
const sidebarTools = [
  ['hamburger', 'Sidebar Settings'],
  ['properties', 'Properties'],
  ['styles', 'Styles'],
  ['gallery', 'Gallery'],
  ['navigator', 'Navigator'],
  ['fx', 'Functions'],
];

export default function App() {
  return (
    <Window>
      <GlobalStyle />
      <MenuBar>
        {menus.map((m) => (
          <MenuButton key={m}>{m}</MenuButton>
        ))}
        <CloseButton aria-label="Close Document">
          <Svg size={12}>{icons.close}</Svg>
        </CloseButton>
      </MenuBar>
      <Toolbar>
        <Tools groups={standardTools} tight={[3, 4, 9, 11]} />
      </Toolbar>
      <FormatBar>
        <Combo $width={137}>
          <ComboInput $italic defaultValue="Calibri" aria-label="Font Name" />
          <ComboButton aria-label="Font list"><Caret $big /></ComboButton>
        </Combo>
        <ComboGap />
        <Combo $width={67}>
          <ComboInput defaultValue="14 pt" aria-label="Font Size" />
          <ComboButton aria-label="Size list"><Caret $big /></ComboButton>
        </Combo>
        <Separator />
        <Tools groups={formatTools} tight={[1, 9, 10]} />
      </FormatBar>
      <Workspace>
        <Main>
          <FormulaBar>
            <Combo $width={108}>
              <ComboInput defaultValue="A1:H1" aria-label="Name Box" />
              <ComboButton aria-label="Name list"><Caret $big /></ComboButton>
            </Combo>
            <FormulaTools>
              <SmallTool $w={16} aria-label="Function Wizard"><Svg size={14}>{icons.fx}</Svg></SmallTool>
              <SmallTool $w={14} aria-label="Select Function"><Svg size={12}>{icons.sigma}</Svg></SmallTool>
              <SmallTool $w={11} aria-label="Select Function options"><Caret /></SmallTool>
              <SmallTool $w={15} aria-label="Formula"><Svg size={14}>{icons.equals}</Svg></SmallTool>
            </FormulaTools>
            <FormulaInput defaultValue="CALCOLO COSTO DEL PERSONALE" aria-label="Input line" />
            <SmallTool $w={13} aria-label="Expand Formula Bar"><Caret $big /></SmallTool>
          </FormulaBar>
          <SheetArea>
            <GridViewport>
              <SheetGrid />
            </GridViewport>
            <VerticalTrack><VerticalThumb /></VerticalTrack>
          </SheetArea>
          <HorizontalTrack>
            <HorizontalThumb />
            <SplitGrip />
          </HorizontalTrack>
          <TabBar>
            <TabTool $w={15} aria-label="First sheet"><Svg size={14}>{icons.first}</Svg></TabTool>
            <TabTool $w={16} aria-label="Previous sheet"><Svg size={14}>{icons.previous}</Svg></TabTool>
            <TabTool $w={16} aria-label="Next sheet"><Svg size={14}>{icons.next}</Svg></TabTool>
            <TabTool $w={15} aria-label="Last sheet"><Svg size={14}>{icons.last}</Svg></TabTool>
            <TabTool $w={25} aria-label="Add sheet"><Svg size={14}>{icons.addSheet}</Svg></TabTool>
            <SheetTab $on>Istruzioni</SheetTab>
            <SheetTab>Parametri</SheetTab>
            <TabDivider />
            <SheetTab>Inserimento</SheetTab>
            <TabDivider />
            <SheetTab>Dashboard</SheetTab>
            <TabDivider />
          </TabBar>
        </Main>
        <Sidebar>
          {sidebarTools.map(([icon, label]) => (
            <SidebarButton key={icon} aria-label={label}>
              <Svg>{icons[icon]}</Svg>
            </SidebarButton>
          ))}
          <SidebarHandle />
        </Sidebar>
      </Workspace>
      <StatusBar>
        <StatusItem $plain><Svg size={12}>{icons.disk}</Svg></StatusItem>
        <StatusItem>Sheet 1 of 4</StatusItem>
        <StatusItem>Selected: 1 row, 8 columns</StatusItem>
        <StatusItem>PageStyle_Istruzioni</StatusItem>
        <StatusItem $center>English (USA)</StatusItem>
        <StatusItem />
        <StatusItem>
          <svg width="20" height="12" viewBox="0 0 20 12" fill="none" stroke={ink} aria-hidden="true">
            <path d="M.5 2.500h11V9H.5z" stroke={blue} />
            <path d="M15 .5h4M15 11.500h4M17 .5v11" />
          </svg>
        </StatusItem>
        <StatusItem />
        <StatusItem />
        <StatusItem $center>Average: ; Sum: 0</StatusItem>
        <StatusItem $center>
          <ZoomButton aria-label="Zoom Out">
            <svg width="7" height="8" viewBox="0 0 7 8" stroke="#222" strokeWidth="1.500"><path d="M0 4h7" /></svg>
          </ZoomButton>
          <ZoomSlider type="range" min={0} max={200} defaultValue={100} aria-label="Zoom" />
          <ZoomButton aria-label="Zoom In">
            <svg width="7" height="8" viewBox="0 0 7 8" stroke="#222" strokeWidth="1.500"><path d="M0 4h7M3.500.5v7" /></svg>
          </ZoomButton>
        </StatusItem>
        <ZoomValue $plain>100%</ZoomValue>
      </StatusBar>
    </Window>
  );
}
